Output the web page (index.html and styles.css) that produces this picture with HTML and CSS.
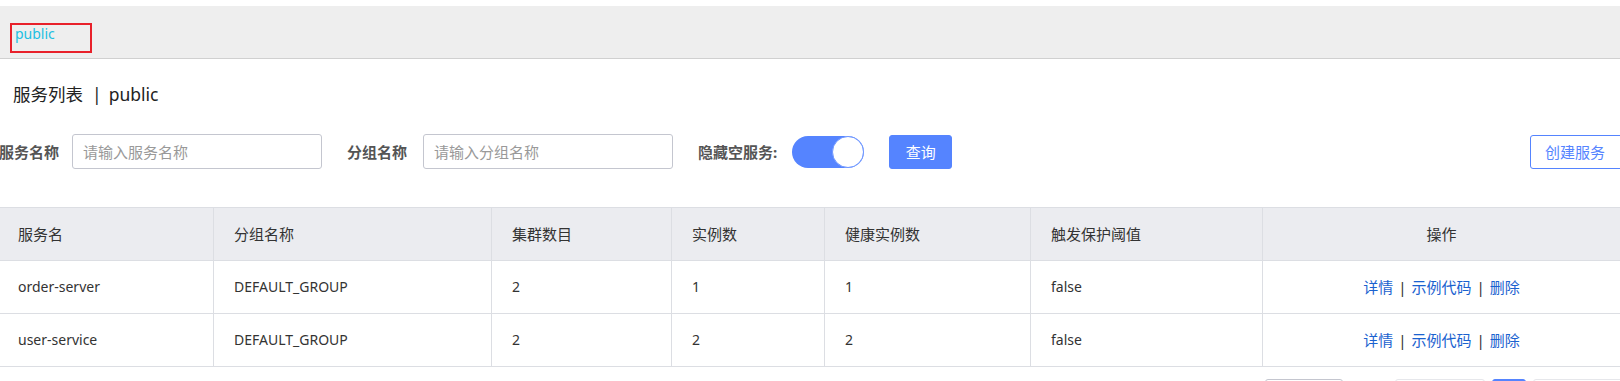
FILE: index.html
```html
<!DOCTYPE html>
<html lang="zh-CN">
<head>
<meta charset="utf-8">
<title>服务列表</title>
<link rel="stylesheet" href="styles.css">
</head>
<body>
<div class="page">
  <div class="nsbar">
    <div class="ns-box"><span class="ns-name">public</span></div>
  </div>
  <div class="content">
    <h1 class="title"><span>服务列表</span><span class="title-sep">|</span><span>public</span></h1>
    <div class="filters">
      <label class="flabel flabel-first">服务名称</label>
      <input class="finput" type="text" placeholder="请输入服务名称">
      <label class="flabel">分组名称</label>
      <input class="finput" type="text" placeholder="请输入分组名称">
      <label class="flabel flabel-switch">隐藏空服务:</label>
      <span class="switch"><span class="knob"></span></span>
      <button class="btn btn-primary">查询</button>
      <button class="btn btn-outline">创建服务</button>
    </div>
    <table class="grid">
      <colgroup>
        <col class="c1"><col class="c2"><col class="c3"><col class="c4"><col class="c5"><col class="c6"><col class="c7">
      </colgroup>
      <thead>
        <tr><th>服务名</th><th>分组名称</th><th>集群数目</th><th>实例数</th><th>健康实例数</th><th>触发保护阈值</th><th class="ops">操作</th></tr>
      </thead>
      <tbody>
        <tr><td>order-server</td><td>DEFAULT_GROUP</td><td>2</td><td>1</td><td>1</td><td>false</td>
          <td class="ops"><a class="lnk">详情</a><span class="sep">|</span><a class="lnk">示例代码</a><span class="sep">|</span><a class="lnk">删除</a></td></tr>
        <tr><td>user-service</td><td>DEFAULT_GROUP</td><td>2</td><td>2</td><td>2</td><td>false</td>
          <td class="ops"><a class="lnk">详情</a><span class="sep">|</span><a class="lnk">示例代码</a><span class="sep">|</span><a class="lnk">删除</a></td></tr>
      </tbody>
    </table>
    <div class="pager">
      <span class="pg pg-size"></span>
      <span class="pg pg-prev"></span>
      <span class="pg pg-cur"></span>
      <span class="pg pg-next"></span>
    </div>
  </div>
</div>
</body>
</html>
```
FILE: styles.css
```css
html, body {
  margin: 0;
  padding: 0;
  overflow: hidden;
  background: #fff;
}
body {
  font-family: "Noto Sans", "Noto Sans CJK SC", sans-serif;
  font-size: 14px;
  color: #333;
}
.page {
  width: 1624px;
}
.nsbar {
  margin-top: 6px;
  height: 53px;
  box-sizing: border-box;
  background: #eeeeee;
  border-bottom: 1px solid #d0d0d0;
  padding: 17px 0 0 10px;
}
.ns-box {
  width: 75px;
  height: 26px;
  border: 2px solid #e8202a;
  padding-left: 3px;
}
.ns-name {
  display: block;
  line-height: 18px;
  font-size: 14px;
  color: #22bfe2;
}
.title {
  margin: 23px 0 0 13px;
  font-size: 17.5px;
  font-weight: normal;
  line-height: 24px;
  color: #222;
}
.title-sep {
  margin: 0 7px 0 9px;
}
.filters {
  display: flex;
  align-items: center;
  margin: 28px 0 0 -1px;
  height: 35px;
}
.flabel {
  font-weight: bold;
  color: #555;
  font-size: 15px;
  margin-right: 16px;
  white-space: nowrap;
}
.flabel-first {
  margin-right: 13px;
}
.flabel-switch {
  margin-right: 15px;
}
.finput {
  width: 250px;
  height: 35px;
  box-sizing: border-box;
  border: 1px solid #c4c6cf;
  border-radius: 3px;
  padding: 0 10px;
  font-family: inherit;
  font-size: 15px;
  color: #333;
  margin-right: 25px;
  outline: none;
}
.finput::placeholder {
  color: #999;
}
.switch {
  position: relative;
  display: block;
  width: 72px;
  height: 32px;
  border-radius: 16px;
  background: #5584ff;
  margin-right: 25px;
}
.knob {
  position: absolute;
  right: 0;
  top: 0;
  width: 32px;
  height: 32px;
  box-sizing: border-box;
  border-radius: 50%;
  background: #fff;
  border: 1px solid #6f97ff;
}
.btn {
  height: 34px;
  box-sizing: border-box;
  border-radius: 3px;
  font-family: inherit;
  font-size: 15px;
  cursor: pointer;
}
.btn-primary {
  width: 63px;
  padding: 0;
  background: #5584ff;
  border: 1px solid #5584ff;
  color: #fff;
}
.btn-outline {
  margin-left: auto;
  width: 94px;
  padding: 0 0 0 14px;
  text-align: left;
  background: #fff;
  border: 1px solid #5584ff;
  color: #5584ff;
}
.grid {
  margin-top: 38px;
  width: 1624px;
  table-layout: fixed;
  border-collapse: separate;
  border-spacing: 0;
  border-top: 1px solid #dcdee3;
}
.c1 { width: 213px; }
.c2 { width: 278px; }
.c3 { width: 180px; }
.c4 { width: 153px; }
.c5 { width: 206px; }
.c6 { width: 232px; }
.c7 { width: 362px; }
.grid th, .grid td {
  padding: 16px 20px;
  line-height: 20px;
  font-size: 14px;
  font-weight: normal;
  color: #333;
  text-align: left;
  border-bottom: 1px solid #dcdee3;
  border-left: 1px solid #dcdee3;
  white-space: nowrap;
}
.grid th {
  background: #ebecf0;
  font-size: 15px;
}
.grid th:first-child, .grid td:first-child {
  border-left: none;
  padding-left: 18px;
}
.grid .ops {
  text-align: center;
  padding-left: 0;
  padding-right: 4px;
  font-size: 15px;
}
.lnk {
  color: #1a62cf;
  text-decoration: none;
  cursor: pointer;
}
.sep {
  margin: 0 5px;
  color: #333;
}
.pager {
  display: flex;
  justify-content: flex-end;
  margin-top: 12px;
}
.pg {
  display: block;
  height: 28px;
  box-sizing: border-box;
  border-radius: 3px;
  border: 1px solid #e6e7eb;
}
.pg-size {
  width: 78px;
  border-color: #c4c6cf;
  margin-right: 52px;
}
.pg-prev {
  width: 90px;
  margin-right: 7px;
}
.pg-cur {
  width: 34px;
  background: #5584ff;
  border-color: #5584ff;
  margin-right: 7px;
}
.pg-next {
  width: 91px;
}
```
